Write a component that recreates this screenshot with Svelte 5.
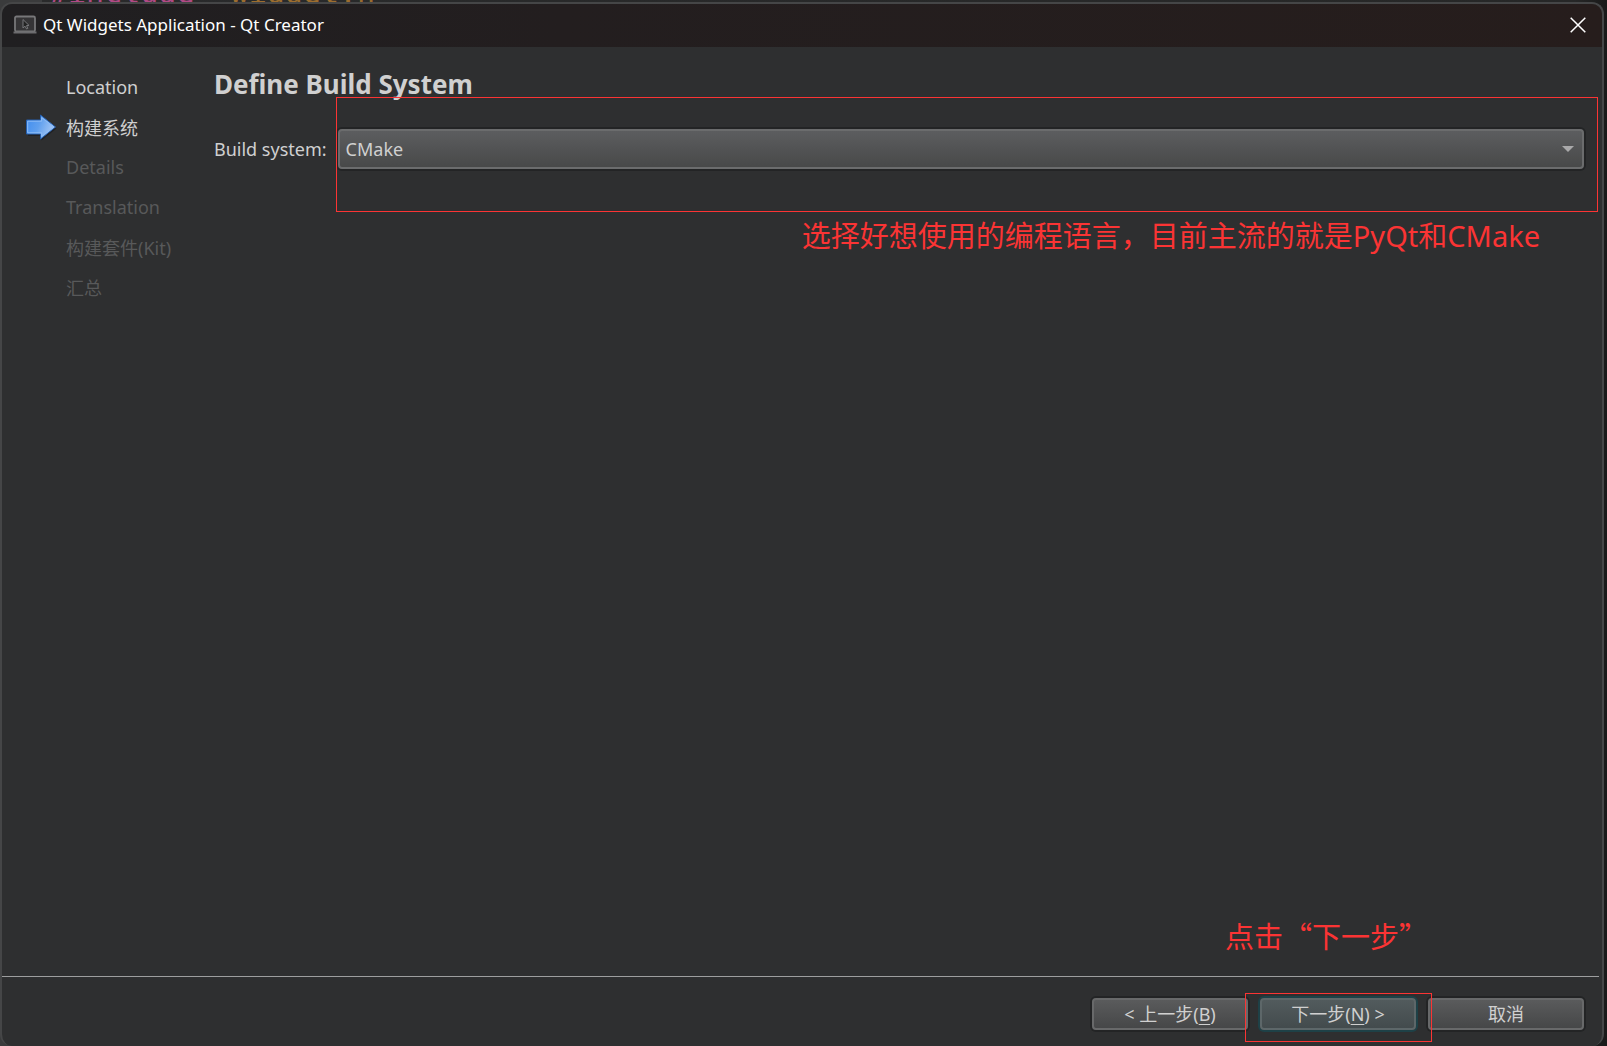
<script>
  const steps = [
    { name: 'Location', state: 'done' },
    { name: '构建系统', state: 'current' },
    { name: 'Details', state: 'pending' },
    { name: 'Translation', state: 'pending' },
    { name: '构建套件(Kit)', state: 'pending' },
    { name: '汇总', state: 'pending' }
  ];
  let buildSystem = $state('CMake');
</script>

<div class="desktop">
  <pre class="editor" aria-hidden="true"><span class="directive">#include</span> "widget.h"</pre>

  <div class="dialog" role="dialog" aria-labelledby="dialog-title">
    <header class="titlebar">
      <svg class="app-icon" width="24" height="20" viewBox="0 0 24 20" aria-hidden="true">
        <rect x="2" y="1.5" width="20" height="15" rx="1.5" fill="#353436" stroke="#777779" stroke-width="1.8" />
        <path d="M0.5 17.5H23.5" stroke="#6c6c6f" stroke-width="2" />
        <path d="M10 4.5V13L12 11.2L13.6 14L14.8 13.4L13.5 10.6L16 10.4Z" fill="#222" stroke="#77777a" stroke-width="1" />
      </svg>
      <span id="dialog-title">Qt Widgets Application - Qt Creator</span>
      <button class="close" aria-label="Close">
        <svg width="16" height="16" viewBox="0 0 16 16" aria-hidden="true">
          <path d="M0.7 0.7L15.3 15.3M15.3 0.7L0.7 15.3" stroke="#fff" stroke-width="1.5" fill="none" />
        </svg>
      </button>
    </header>

    <div class="body">
      <ol class="steps">
        {#each steps as step}
          <li class={step.state}>
            <span class="marker">
              {#if step.state === 'current'}
                <svg width="32" height="28" viewBox="0 0 32 28" aria-hidden="true">
                  <defs>
                    <linearGradient id="arrow-fill" x1="0" y1="0" x2="1" y2="0.3">
                      <stop offset="0" stop-color="#3f8df0" />
                      <stop offset="0.5" stop-color="#5f9fee" />
                      <stop offset="1" stop-color="#a3c6f5" />
                    </linearGradient>
                  </defs>
                  <path d="M2 8.5H15.5V4L30.5 15.5L15.5 27.5V23H2Z" fill="#202123" />
                  <path d="M0.5 7H14.5V2L29.5 14L14.5 26V21H0.5Z" fill="url(#arrow-fill)" stroke="#245fae" stroke-width="1" />
                  <path d="M1.7 8.2H15.7V4.7L27.7 14L15.7 23.3V19.8H1.7Z" fill="none" stroke="#8dbcf5" stroke-width="1" />
                </svg>
              {/if}
            </span>
            {step.name}
          </li>
        {/each}
      </ol>

      <main class="page">
        <h1>Define Build System</h1>
        <div class="field">
          <label for="build-system">Build system:</label>
          <div class="combo">
            <select id="build-system" bind:value={buildSystem}>
              <option>CMake</option>
            </select>
            <svg class="chevron" width="12" height="6" viewBox="0 0 12 6" aria-hidden="true">
              <path d="M0 0H12L6 6Z" fill="#a9a9aa" />
            </svg>
            <div class="mark field-mark"></div>
            <p class="note field-note">选择好想使用的编程语言，目前主流的就是PyQt和CMake</p>
          </div>
        </div>
      </main>
    </div>

    <footer class="actions">
      <button class="btn">&lt; 上一步(<u>B</u>)</button>
      <div class="next">
        <button class="btn primary">下一步(<u>N</u>) &gt;</button>
        <div class="mark next-mark"></div>
        <p class="note next-note" lang="zh-CN">点击“下一步”</p>
      </div>
      <button class="btn">取消</button>
    </footer>
  </div>
</div>

<style>
  :global(body) {
    margin: 0;
    background: #1b1b1b;
  }
  .desktop {
    box-sizing: border-box;
    position: relative;
    min-height: 100vh;
    padding: 2px 3px 0 0;
    display: flex;
    overflow: hidden;
    background: linear-gradient(90deg, #3a3b3c 0, #3a3b3c 42px, #292a2b 42px, #262727 98%, #191919 100%);
    font-family: 'Noto Sans', 'Noto Sans CJK SC', sans-serif;
    font-size: 18px;
    color: #d0d0d0;
  }
  .editor {
    position: absolute;
    left: 50px;
    top: -22px;
    margin: 0;
    font: 30px/30px 'DejaVu Sans Mono', monospace;
    color: #9c6d2f;
  }
  .directive {
    color: #b04a85;
  }
  .dialog {
    position: relative;
    flex: 1;
    display: flex;
    flex-direction: column;
    border: 2px solid #454647;
    border-bottom-width: 0;
    border-radius: 12px;
    overflow: hidden;
    background: #2e2f30;
  }
  .titlebar {
    display: flex;
    align-items: center;
    height: 41px;
    padding: 0 16px 2px 11px;
    background: linear-gradient(90deg, #201f21, #231e1f 35%, #261d1c);
    color: #fff;
    font-size: 17px;
  }
  .app-icon {
    margin-right: 6px;
  }
  .close {
    display: flex;
    margin-left: auto;
    padding: 0;
    border: 0;
    background: none;
  }
  .body {
    flex: 1;
    display: flex;
  }
  .steps {
    width: 212px;
    margin: 0;
    padding: 20px 0 0 24px;
    box-sizing: border-box;
    flex: none;
    list-style: none;
  }
  .steps li {
    display: flex;
    align-items: center;
    height: 40px;
  }
  .marker {
    display: flex;
    width: 40px;
  }
  .pending {
    color: #58595a;
  }
  .page {
    flex: 1;
    padding: 19px 18px 0 0;
  }
  h1 {
    margin: 0;
    font-size: 26px;
    line-height: 36px;
    font-weight: 700;
  }
  .field {
    display: flex;
    align-items: center;
    gap: 11px;
    margin-top: 27px;
  }
  .combo {
    position: relative;
    flex: 1;
  }
  select {
    display: block;
    width: 100%;
    height: 40px;
    padding: 0 32px 0 6px;
    appearance: none;
    border: 2px solid #6b6c6d;
    border-radius: 4px;
    outline: 0;
    box-shadow: 0 0 0 2px #232425;
    background: linear-gradient(#5c5d5f, #484949);
    color: #d0d0d0;
    font: inherit;
  }
  .chevron {
    position: absolute;
    right: 10px;
    top: 17px;
    pointer-events: none;
  }
  .mark {
    position: absolute;
    border: 1px solid #fb3434;
    pointer-events: none;
  }
  .field-mark {
    inset: -32px -14px -43px -2px;
  }
  .note {
    position: absolute;
    margin: 0;
    color: #fb3434;
    font-size: 29px;
    line-height: 40px;
    white-space: nowrap;
  }
  .field-note {
    right: 44px;
    top: 87px;
  }
  .actions {
    display: flex;
    gap: 12px;
    justify-content: flex-end;
    margin-right: 3px;
    padding: 21px 15px 16px;
    border-top: 1px solid #9d9e9f;
  }
  .next {
    position: relative;
  }
  .btn {
    display: block;
    width: 156px;
    height: 32px;
    padding: 0;
    border: 2px solid #68696a;
    border-radius: 4px;
    box-shadow: 0 0 0 2px #232425;
    background: linear-gradient(#5a5b5c, #464748);
    color: #d0d0d0;
    font: inherit;
    line-height: 26px;
  }
  .btn u {
    text-underline-offset: 3px;
  }
  .primary {
    border-color: #5d6769;
    box-shadow: 0 0 0 2px #1e4147;
    background: linear-gradient(#525b5d, #434b4d);
  }
  .next-mark {
    inset: -5px -16px -12px -15px;
  }
  .next-note {
    left: -35px;
    bottom: 75px;
    font-family: 'Noto Sans CJK SC', sans-serif;
  }
</style>
